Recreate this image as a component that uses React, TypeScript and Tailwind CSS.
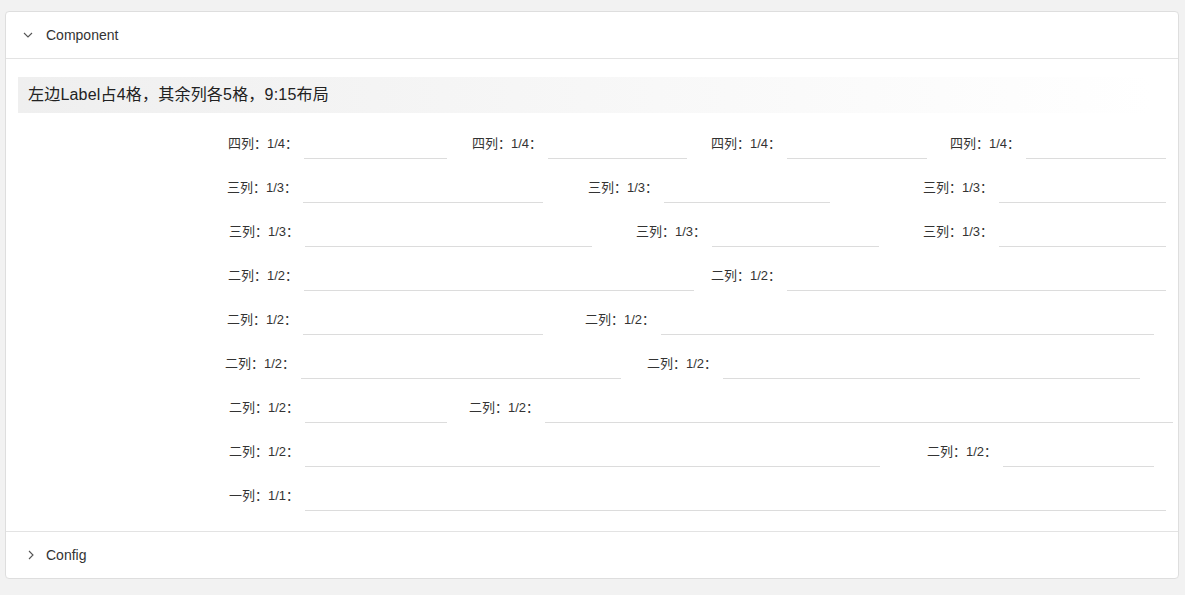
import React from 'react';

// each field: where its underline starts and ends (px, page coords)
type Field = { label: string; from: number; to: number };

const ROW_START = 204;

const rows: Field[][] = [
  [
    { label: '四列：1/4：', from: 304, to: 447 },
    { label: '四列：1/4：', from: 548, to: 687 },
    { label: '四列：1/4：', from: 787, to: 927 },
    { label: '四列：1/4：', from: 1026, to: 1166 },
  ],
  [
    { label: '三列：1/3：', from: 303, to: 543 },
    { label: '三列：1/3：', from: 664, to: 830 },
    { label: '三列：1/3：', from: 999, to: 1166 },
  ],
  [
    { label: '三列：1/3：', from: 305, to: 592 },
    { label: '三列：1/3：', from: 712, to: 879 },
    { label: '三列：1/3：', from: 999, to: 1166 },
  ],
  [
    { label: '二列：1/2：', from: 304, to: 694 },
    { label: '二列：1/2：', from: 787, to: 1166 },
  ],
  [
    { label: '二列：1/2：', from: 303, to: 543 },
    { label: '二列：1/2：', from: 661, to: 1154 },
  ],
  [
    { label: '二列：1/2：', from: 301, to: 621 },
    { label: '二列：1/2：', from: 723, to: 1140 },
  ],
  [
    { label: '二列：1/2：', from: 305, to: 447 },
    { label: '二列：1/2：', from: 545, to: 1173 },
  ],
  [
    { label: '二列：1/2：', from: 305, to: 880 },
    { label: '二列：1/2：', from: 1003, to: 1154 },
  ],
  [{ label: '一列：1/1：', from: 305, to: 1166 }],
];

const ChevronDown = () => (
  <svg width="10" height="6" viewBox="0 0 10 6" fill="none">
    <polyline points="1,1 5,5 9,1" stroke="#555" strokeWidth="1.1" />
  </svg>
);

const ChevronRight = () => (
  <svg width="6" height="10" viewBox="0 0 6 10" fill="none">
    <polyline points="1,1 5,5 1,9" stroke="#555" strokeWidth="1.1" />
  </svg>
);

const FormRow = ({ fields }: { fields: Field[] }) => {
  let start = ROW_START;
  return (
    <div className="flex h-[28px] mb-4">
      {fields.map((f, i) => {
        const labelW = f.from - start;
        const inputW = f.to - f.from;
        start = f.to;
        return (
          <div key={i} className="flex h-full">
            <div
              className="flex items-center justify-end pr-[6px] pb-[2px] text-[13px] text-[#333] whitespace-nowrap"
              style={{ width: labelW }}
            >
              {f.label}
            </div>
            <div className="h-full border-b border-[#dcdcdc]" style={{ width: inputW }} />
          </div>
        );
      })}
    </div>
  );
};

export default function App() {
  return (
    <div
      className="min-h-[595px] bg-[#f2f2f2] pt-[11px] pl-[5px] pr-[6px] pb-4"
      style={{ fontFamily: '"Liberation Sans", "Noto Sans CJK SC", sans-serif' }}
    >
      <div className="bg-white border border-[#dedede] rounded-[4px]">
        {/* Component panel header */}
        <div className="h-[47px] flex items-center border-b border-[#e3e3e3]">
          <span className="w-[40px] flex justify-end pr-[13px]">
            <ChevronDown />
          </span>
          <span className="text-[14px] text-[#333]">Component</span>
        </div>

        {/* Panel body */}
        <div className="px-3 pt-[18px] pb-[4px] border-b border-[#e3e3e3]">
          <div className="h-[36px] flex items-center pl-[10px] bg-linear-to-r from-[#efefef] via-[#f7f7f7] to-white w-[1134px]">
            <span className="text-[16px] tracking-[0.2px] text-[#222]">左边Label占4格，其余列各5格，9:15布局</span>
          </div>
          <div className="mt-[18px] ml-[186px]">
            {rows.map((r, i) => (
              <FormRow key={i} fields={r} />
            ))}
          </div>
        </div>

        {/* Config panel header */}
        <div className="h-[46px] flex items-center">
          <span className="w-[40px] flex justify-end pr-[12px]">
            <ChevronRight />
          </span>
          <span className="text-[14px] text-[#333]">Config</span>
        </div>
      </div>
    </div>
  );
}
